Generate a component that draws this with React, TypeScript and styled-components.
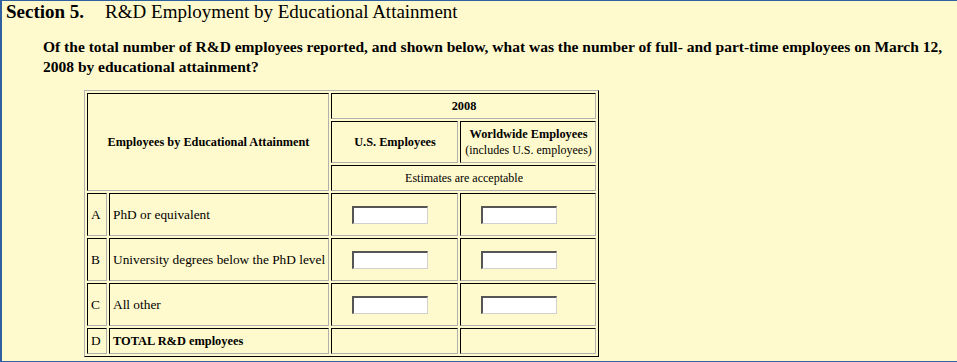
import React from "react";
import styled, { createGlobalStyle } from "styled-components";

const serif = `"Liberation Serif", "Times New Roman", serif`;

const GlobalStyle = createGlobalStyle`
  html, body {
    margin: 0;
    padding: 0;
    background: #fffacd;
  }
  body {
    font-family: ${serif};
    color: #000;
  }
`;

const Frame = styled.div`
  box-sizing: border-box;
  height: 362px;
  overflow: hidden;
  background: #fffacd;
  font-family: ${serif};
  border-top: 1px solid #30609f;
  border-left: 2px solid #30609f;
  border-bottom: 1px solid #30609f;
`;

const SectionTitle = styled.h2`
  margin: 0;
  padding-left: 4px;
  font-family: ${serif};
  font-size: 19px;
  line-height: 22px;
  font-weight: normal;
  white-space: nowrap;
`;

const SectionNumber = styled.span`
  font-weight: bold;
  margin-right: 21px;
`;

const Question = styled.p`
  margin: 14px 10px 0 41px;
  font-family: ${serif};
  font-size: 15.5px;
  line-height: 20px;
  font-weight: bold;
`;

const DataTable = styled.table`
  margin: 13px 0 0 82px;
  width: 515px;
  table-layout: fixed;
  border-collapse: separate;
  border-spacing: 2px;
  border: 1px solid;
  border-color: #b0b0b0 #000 #000 #b0b0b0;
  font-family: ${serif};
`;

const Row = styled.tr<{ $h: number }>`
  height: ${(p) => p.$h}px;
`;

const Cell = styled.td<{ $center?: boolean }>`
  border: 1px solid;
  border-color: #000 #b0b0b0 #b0b0b0 #000;
  padding: 0 2px 0 3px;
  font-family: ${serif};
  font-size: 13.33px;
  line-height: 16px;
  white-space: nowrap;
  vertical-align: middle;
  text-align: ${(p) => (p.$center ? "center" : "left")};
`;

const HeadCell = styled(Cell).attrs({ $center: true })`
  font-size: 12.3px;
  font-weight: bold;
`;

const NoteCell = styled(Cell).attrs({ $center: true })`
  font-size: 12px;
`;

const Note = styled.span`
  font-size: 12px;
  font-weight: normal;
`;

const TotalLabel = styled.span`
  font-size: 12.4px;
  font-weight: bold;
`;

const EntryCell = styled(Cell)`
  padding: 0 0 0 20px;
`;

const EntryInput = styled.input`
  display: block;
  box-sizing: border-box;
  width: 76px;
  height: 18px;
  margin: 0;
  padding: 1px 2px;
  background: #fff;
  border-style: solid;
  border-width: 2px 1px 1px 2px;
  border-color: #555 #d0d0d0 #d0d0d0 #555;
  font-family: "Liberation Sans", Arial, sans-serif;
  font-size: 12px;
  outline: none;
`;

type Attainment = { code: string; label: string; total?: boolean };

const rows: Attainment[] = [
  { code: "A", label: "PhD or equivalent" },
  { code: "B", label: "University degrees below the PhD level" },
  { code: "C", label: "All other" },
  { code: "D", label: "TOTAL R&D employees", total: true },
];

export default function App() {
  return (
    <>
      <GlobalStyle />
      <Frame>
        <SectionTitle>
          <SectionNumber>Section 5.</SectionNumber>R&amp;D Employment by Educational Attainment
        </SectionTitle>
        <Question>
          Of the total number of R&amp;D employees reported, and shown below, what was the number of
          full- and part-time employees on March 12, 2008 by educational attainment?
        </Question>
        <DataTable>
          <colgroup>
            <col style={{ width: 20 }} />
            <col style={{ width: 220 }} />
            <col style={{ width: 127 }} />
            <col style={{ width: 136 }} />
          </colgroup>
          <tbody>
            <Row $h={26}>
              <HeadCell colSpan={2} rowSpan={3}>
                Employees by Educational Attainment
              </HeadCell>
              <HeadCell colSpan={2}>2008</HeadCell>
            </Row>
            <Row $h={42}>
              <HeadCell>U.S. Employees</HeadCell>
              <HeadCell>
                Worldwide Employees
                <br />
                <Note>(includes U.S. employees)</Note>
              </HeadCell>
            </Row>
            <Row $h={26}>
              <NoteCell colSpan={2}>Estimates are acceptable</NoteCell>
            </Row>
            {rows.map((r) => (
              <Row key={r.code} $h={r.total ? 26 : 43}>
                <Cell>{r.code}</Cell>
                <Cell>{r.total ? <TotalLabel>{r.label}</TotalLabel> : r.label}</Cell>
                {r.total ? (
                  <>
                    <Cell />
                    <Cell />
                  </>
                ) : (
                  <>
                    <EntryCell>
                      <EntryInput type="text" aria-label={`${r.label}, U.S. employees`} />
                    </EntryCell>
                    <EntryCell>
                      <EntryInput type="text" aria-label={`${r.label}, worldwide employees`} />
                    </EntryCell>
                  </>
                )}
              </Row>
            ))}
          </tbody>
        </DataTable>
      </Frame>
    </>
  );
}
